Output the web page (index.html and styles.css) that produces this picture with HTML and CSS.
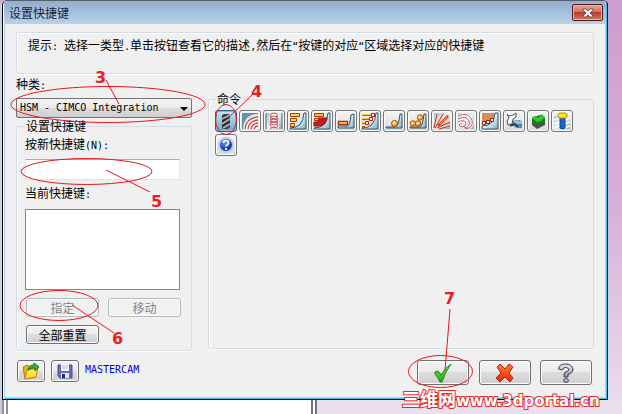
FILE: index.html
```html
<!DOCTYPE html>
<html lang="zh-CN">
<head>
<meta charset="utf-8">
<title>设置快捷键</title>
<link rel="stylesheet" href="styles.css">
</head>
<body>
<svg class="defs" aria-hidden="true">
  <defs>
    <linearGradient id="steel" x1="0" y1="0" x2="1" y2="1"><stop offset="0" stop-color="#9cc3d8"/><stop offset=".5" stop-color="#e3f0f6"/><stop offset="1" stop-color="#7fb0ca"/></linearGradient>
    <linearGradient id="green" x1="0" y1="0" x2="0" y2="1"><stop offset="0" stop-color="#8af04a"/><stop offset="1" stop-color="#1fa51b"/></linearGradient>
    <linearGradient id="red" x1="0" y1="0" x2="0" y2="1"><stop offset="0" stop-color="#ff7b33"/><stop offset="1" stop-color="#e42a08"/></linearGradient>
    <linearGradient id="silver" x1="0" y1="0" x2="0" y2="1"><stop offset="0" stop-color="#e4e6f2"/><stop offset="1" stop-color="#8e92a8"/></linearGradient>
    <radialGradient id="ball" cx=".4" cy=".35"><stop offset="0" stop-color="#fff3c0"/><stop offset="1" stop-color="#f9a51c"/></radialGradient>
    <radialGradient id="globe" cx=".4" cy=".3"><stop offset="0" stop-color="#6f9cf5"/><stop offset="1" stop-color="#123fae"/></radialGradient>
  </defs>
</svg>
<main class="dialog">
  <header class="titlebar">
    <h1>设置快捷键</h1>
    <button class="close" aria-label="关闭"><svg width="12" height="10" viewBox="0 0 12 10"><path d="M1 1h3l2 2.200L8 1h3v1L8 5l3 3v1H8L6 6.800 4 9H1V8l3-3-3-3z" fill="#fff" stroke="#5b3b48" stroke-width=".8"/></svg></button>
  </header>
  <div class="content">
    <p class="hint">提示<span class="half">: </span>选择一类型<span class="half">.</span>单击按钮查看它的描述<span class="half">,</span>然后在<span class="half">“</span>按键的对应<span class="half">“</span>区域选择对应的快捷键</p>
    <div class="columns">
      <section class="side">
        <label class="caption" for="category">种类<span class="half">:</span></label>
        <div class="combo"><select id="category"><option>HSM - CIMCO Integration</option></select></div>
        <fieldset class="group keys">
          <legend>设置快捷键</legend>
          <label for="newkey">按新快捷键<span class="half">(N):</span></label>
          <input id="newkey" type="text">
          <label for="current">当前快捷键<span class="half">:</span></label>
          <select id="current" size="5"></select>
          <div class="actions">
            <button class="btn" disabled>指定</button>
            <button class="btn" disabled>移动</button>
            <button class="btn">全部重置</button>
          </div>
        </fieldset>
      </section>
      <fieldset class="group commands">
        <legend>命令</legend>
        <div class="tools">
          <button class="tool on" aria-label="刀具"><svg viewBox="0 0 18 18"><path d="M5 3l2-1h5l1 1v12l-2 2H6l-1-1z" fill="#3c3f41"/><path d="M5 7l8-4M5 12l8-5M6 16l7-4" stroke="#aab1b5" stroke-width="1.800"/><path d="M5 9l8-4M5 14l8-5" stroke="#171717"/></svg></button>
          <button class="tool" aria-label="平行"><svg viewBox="0 0 18 18"><path d="M1 1h16v16H1z" fill="url(#steel)"/><path d="M1 1h16v1Q3 2 2 17H1z" fill="#5f93ad"/><path d="M3 17Q4 5 17 4v13z" fill="#fff"/><path d="M4 17Q5 6 17 5M7 17Q8 9 17 8M10 17Q11 12 17 11M13 17q1-3 4-3" fill="none" stroke="#cf4546" stroke-width="1.400"/></svg></button>
          <button class="tool" aria-label="螺旋"><svg viewBox="0 0 18 18"><path d="M1 1h16v16H1z" fill="url(#steel)"/><path d="M4 17V6q0-5 5-5t5 5v11z" fill="#fff"/><path d="M1 1v16M17 1v16" stroke="#446c84"/><g fill="none" stroke="#c94d50"><ellipse cx="9" cy="4" rx="3.500" ry="3"/><ellipse cx="9" cy="7" rx="4" ry="3"/><ellipse cx="9" cy="10" rx="4" ry="3"/><ellipse cx="9" cy="13" rx="4" ry="3"/><path d="M5 17q4-4 8 0"/></g></svg></button>
          <button class="tool" aria-label="粗加工"><svg viewBox="0 0 18 18"><path d="M1 1h16v16H1z" fill="#dcebf2"/><path d="M17 1v16H1v-1q13 0 14-15z" fill="url(#steel)" stroke="#27566b"/><path d="M1.500 1.500h9v3h-9zM1.500 6.500h6v3h-6zM1.500 11.500h4v3h-4z" fill="#ffd65a" stroke="#a83a00"/></svg></button>
          <button class="tool" aria-label="残料粗加工"><svg viewBox="0 0 18 18"><path d="M1 1h16v16H1z" fill="#dcebf2"/><path d="M17 1v16H1v-1q13 0 14-15z" fill="url(#steel)" stroke="#27566b"/><path d="M5 6h9q-1 8-8 8H1v-4h4z" fill="#cc1b20" stroke="#8a1115"/><path d="M1.500 1.500h9v3h-9zM1.500 6.500h4v2h-4z" fill="#ffbd52" stroke="#a83a00"/></svg></button>
          <button class="tool" aria-label="水平区域"><svg viewBox="0 0 18 18"><path d="M17 2v14H1v-2h9q3 0 4-11z" fill="url(#steel)" stroke="#27566b"/><path d="M1.500 9.500h9v3h-9z" fill="#ffe07a" stroke="#b33100" stroke-width="1.400"/></svg></button>
          <button class="tool" aria-label="等高"><svg viewBox="0 0 18 18"><path d="M17 1v16H1v-1q13 0 14-15z" fill="url(#steel)" stroke="#27566b"/><path d="M1 3h10M1 7h8M1 11h5M1 15h3" stroke="#c55812" stroke-width="2"/><path d="M1 2.500h9M1 6.500h7M1 10.500h4" stroke="#ffc547"/><path d="M10.500 1.500h3v3h-3zM8.500 5.500h3v3h-3zM4.500 9.500h3v3h-3z" fill="#fff" stroke="#b31e08"/></svg></button>
          <button class="tool" aria-label="清角"><svg viewBox="0 0 18 18"><path d="M17 2v14H1v-1h9q4-1 5-13z" fill="url(#steel)" stroke="#27566b"/><circle cx="9.500" cy="11.500" r="3" fill="url(#ball)" stroke="#c14006"/></svg></button>
          <button class="tool" aria-label="残料清角"><svg viewBox="0 0 18 18"><path d="M17 2v14H1v-1h9q4-1 5-13z" fill="url(#steel)" stroke="#27566b"/><g fill="url(#ball)" stroke="#c14006"><circle cx="4" cy="11.500" r="2.700"/><circle cx="9" cy="11.500" r="2.700"/><circle cx="11" cy="5.500" r="2.700"/></g></svg></button>
          <button class="tool" aria-label="放射"><svg viewBox="0 0 18 18"><path d="M1 1h16v16H1z" fill="url(#steel)"/><path d="M1 17L4 2M2 17L10 2M2 17L16 4M2 17l15-8M2 17l15-3" stroke="#fbd9c4" stroke-width="2"/><path d="M1 16L4 2M2 16L10 2M4 16l13-6M6 17l11-3" stroke="#b92f1b"/><path d="M5 14L15 4" stroke="#d2480f" stroke-width="2.500"/><path d="M7 12l7-7" stroke="#ffb43a"/></svg></button>
          <button class="tool" aria-label="螺旋线"><svg viewBox="0 0 18 18"><path d="M1 1h16v16H1z" fill="url(#steel)"/><path d="M1 4Q11-1 15 8q2 8-7 9M1 7q8-4 11 2 2 6-5 7M1 10q6-3 8 1 0 4-4 4-3 0-3-2 1-2 3-1" fill="none" stroke="#fff" stroke-width="2.500"/><path d="M1 4Q11-1 15 8q2 8-7 9M1 7q8-4 11 2 2 6-5 7M1 10q6-3 8 1 0 4-4 4-3 0-3-2 1-2 3-1" fill="none" stroke="#c35560"/></svg></button>
          <button class="tool" aria-label="投影"><svg viewBox="0 0 18 18"><path d="M1 1h16v16H1z" fill="#dcebf2"/><path d="M17 1v16H1v-3q12 0 13-13z" fill="url(#steel)" stroke="#27566b"/><path d="M3 1v9M7 1v8M11 1v6" stroke="#bd430a" stroke-width="3"/><path d="M3 1v9M7 1v8M11 1v6" stroke="#ffd45c"/><path d="M1.500 9.500h3v3h-3zM5.500 8.500h3v3h-3zM9.500 6.500h3v3h-3z" fill="#fff" stroke="#a51b0b"/></svg></button>
          <button class="tool" aria-label="五轴"><svg viewBox="0 0 18 18"><path d="M6 9l9-1 2 2v6h-5l-6-3z" fill="#4f8aa9"/><path d="M9 9l8 0v3h-7z" fill="#8fc1d8"/><path d="M2 2l2 2 4-1 3-2v4L8 7l-1 5-4 1-1-4 2-3z" fill="#f4f6f7" stroke="#4c5559"/><path d="M5 14l5-2 3 3" fill="none" stroke="#263840" stroke-width="1.500"/></svg></button>
          <button class="tool" aria-label="毛坯"><svg viewBox="0 0 18 18"><path d="M3 6l8-3 5 3v7l-8 4-5-4z" fill="#4d504e"/><path d="M3 6l3-2 3 2 3-3 4 3v3l-8 4-5-4z" fill="#08870e"/><path d="M3 6l3-2 3 2 4-4 3 3-4 4-4 1z" fill="#27cf2a"/></svg></button>
          <button class="tool" aria-label="钻孔"><svg viewBox="0 0 18 18"><path d="M1 4l16-2v15H1z" fill="url(#steel)"/><path d="M1 8l16-6M1 12l16-6M1 16l16-6M8 17l9-3" stroke="#fff" stroke-width="1.500"/><path d="M7 5h5v11l-2 1-3-1z" fill="#1267d4" stroke="#124289"/><path d="M5 2l2-1h5l2 1v3l-2 1H7L5 5z" fill="#ffe51a" stroke="#b39a0a"/></svg></button>
          <button class="tool" aria-label="帮助"><svg viewBox="0 0 18 18"><circle cx="9" cy="9" r="7" fill="url(#globe)" stroke="#b9c8ed" stroke-width="2"/><path d="M6.500 7q0-2.500 2.500-2.500T11.500 7Q11.500 8 10 9q-1 .5-1 1.500M9 12v2" fill="none" stroke="#fff" stroke-width="1.700"/></svg></button>
        </div>
      </fieldset>
    </div>
    <footer class="footer">
      <button class="btn file" aria-label="打开"><svg width="18" height="18" viewBox="0 0 18 18"><path d="M1 5l5-2 2 2 7 0-1 10-11 2z" fill="#e5b210" stroke="#a98109"/><path d="M3 17L5 8l11-2-2 9z" fill="#ffe047" stroke="#b88c08"/><path d="M6 8q1-5 6-5V1l5 4-4 4V6Q9 5 6 8z" fill="#35b84b" stroke="#147027"/></svg></button>
      <button class="btn file" aria-label="保存"><svg width="16" height="16" viewBox="0 0 16 16"><path d="M1 2h14v13H3l-2-2z" fill="#6469b8" stroke="#4a4e98"/><path d="M4 1h8v7H4z" fill="#f6f7fb"/><path d="M5 3h6M5 5h6" stroke="#b7bbd0"/><path d="M4 10h8v5H4z" fill="#e2e4f0"/><path d="M5 11h3v4H5z" fill="#282b68"/></svg></button>
      <span class="profile">MASTERCAM</span>
      <button class="btn big ok" aria-label="确定"><svg width="20" height="20" viewBox="0 0 20 20"><path d="M2 9l3-1 3 4Q12 5 18 1q-6 8-9 18H7Q5 14 2 11z" fill="url(#green)" stroke="#128316"/></svg></button>
      <button class="btn big cancel" aria-label="取消"><svg width="20" height="20" viewBox="0 0 20 20"><path d="M2 4l3-3 5 5 4-5 4 3-4 6 4 5-3 4-5-5-5 5-4-4 5-5z" fill="url(#red)" stroke="#ba2108"/></svg></button>
      <button class="btn big help" aria-label="帮助"><svg width="18" height="20" viewBox="0 0 18 20"><path d="M1.500 6Q2 1 8.500 1T16 6q0 4-5 5.500V14H7v-3q0-2 3-2.500 2-1 1.500-2.500Q11 4.500 8.500 4.500T5.500 7z" fill="url(#silver)" stroke="#3b3e4d"/><ellipse cx="9" cy="17.500" rx="2.500" ry="1.800" fill="url(#silver)" stroke="#3b3e4d"/></svg></button>
    </footer>
  </div>
</main>
<div class="desktop"><div class="pane"></div></div>
<svg class="marks" width="622" height="414" viewBox="0 0 622 414">
  <g fill="none" stroke="#e8161d">
    <ellipse cx="108" cy="104.500" rx="97" ry="18"/>
    <ellipse cx="86.500" cy="171.500" rx="65.500" ry="13"/>
    <ellipse cx="226" cy="119.500" rx="10.500" ry="15"/>
    <ellipse cx="59" cy="305.500" rx="39" ry="15"/>
    <ellipse cx="440.500" cy="371.500" rx="32" ry="16"/>
    <path d="M106 80l13 24M106 170l44 22M252 95l-26 25M72 305l42 28M450 309l-5 62"/>
  </g>
  <g class="digits">
    <text x="95" y="83">3</text><text x="251" y="97">4</text><text x="151" y="207">5</text><text x="112" y="344">6</text><text x="444" y="304">7</text>
  </g>
  <text class="watermark" x="402" y="406"><tspan class="site">三维网</tspan>www.3dportal.cn</text>
</svg>
</body>
</html>
```
FILE: styles.css
```css
* { box-sizing: border-box; }

body {
  display: flex;
  flex-direction: column;
  min-height: 100vh;
  margin: 0;
  padding: 0 14px 0 2px;
  overflow: hidden;
  background: linear-gradient(#cf9ccf, #d6b0d8 50%, #eadfee);
  color: #000;
  font: 12px/16px "Noto Sans CJK SC", sans-serif;
}

button, input, select { font: inherit; color: inherit; margin: 0; padding: 0; }
.defs { position: absolute; width: 0; height: 0; }
.half { font: 10px/12px "DejaVu Sans Mono", monospace; white-space: pre; }

.dialog {
  border: 1px solid #000;
  border-top-color: #55606c;
  border-radius: 5px 5px 0 0;
  background: #f0f0f0;
  box-shadow: inset 1px 0 #fff, inset 2px 0 #a9cfee, inset -1px -1px #35c4e8, inset -2px -2px #b7d7ee, -2px 0 #cbd0e2;
}

.titlebar {
  display: flex;
  align-items: center;
  justify-content: space-between;
  height: 23px;
  margin: 0 1px;
  padding: 0 3px 0 5px;
  border-radius: 4px 4px 0 0;
  background: linear-gradient(#93aecb, #a5c0dc 50%, #b9d1ea);
}
.titlebar h1 { margin: 0; color: #10243d; font-size: 12px; font-weight: 400; }
.close {
  display: grid;
  place-items: center;
  width: 31px;
  height: 17px;
  border: 1px solid #501a21;
  border-radius: 2px;
  background: linear-gradient(#e7a597, #cf705f 48%, #b83c2d 50%, #d37a60);
  box-shadow: inset 0 0 0 1px #e9b3a8;
}

.content { padding: 8px 13px 14px; }
.hint {
  height: 42px;
  margin: 0;
  padding: 4px 11px;
  border: 1px solid #d2dde6;
  border-radius: 3px;
  box-shadow: inset 1px 1px #fff, 0 1px #fff;
}

.columns { display: grid; grid-template-columns: 176px 1fr; gap: 16px; }
.side { display: flex; flex-direction: column; padding-top: 2px; }
.caption { height: 22px; }

.combo { position: relative; height: 20px; }
.combo select {
  display: block;
  width: 100%;
  height: 100%;
  padding-left: 3px;
  appearance: none;
  border: 1px solid #737373;
  border-radius: 2px;
  background: linear-gradient(#f2f2f2, #ebebeb 48%, #dcdcdc 50%, #cfcfcf);
  font: 10px/18px "DejaVu Sans Mono", monospace;
}
.combo::after {
  content: "";
  position: absolute;
  top: 9px;
  right: 4px;
  border: 4px solid transparent;
  border-top-color: #000;
  pointer-events: none;
}

.group {
  min-width: 0;
  margin: 0;
  border: 1px solid #d2dde6;
  border-radius: 3px;
  box-shadow: inset 1px 0 #fff, 0 1px #fff;
}
.group legend { padding: 0 1px; line-height: 16px; }

.keys { padding: 0 10px 6px 8px; }
.keys label { display: block; height: 16px; margin-top: 2px; }
.keys input, .keys select { display: block; width: 155px; background: #fff; }
.keys input {
  height: 21px;
  margin: 7px 0 5px;
  border: 1px solid #e2e3ea;
  border-top-color: #abadb3;
}
.keys select {
  height: 81px;
  margin-top: 8px;
  border: 1px solid #828790;
  border-radius: 0;
}
.actions {
  display: grid;
  grid-template-columns: 73px 73px;
  gap: 8px 9px;
  padding: 8px 0 0 1px;
}

.btn {
  height: 19px;
  border: 1px solid #707070;
  border-radius: 3px;
  background: linear-gradient(#f3f3f3, #ebebeb 48%, #dddddd 50%, #cfcfcf);
  box-shadow: inset 0 0 0 1px #fbfbfb;
  line-height: 16px;
}
.btn:disabled { border-color: #b4b9bb; background: #f1f1f1; color: #858585; }

.commands { margin: 17px 0 2px; padding: 0 5px 0 6px; }
.commands legend { margin-left: 1px; }
.tools { display: flex; flex-wrap: wrap; gap: 2px; padding-top: 3px; }
.tool {
  display: grid;
  place-items: center;
  width: 22px;
  height: 22px;
  border: 1px solid #767676;
  border-radius: 3px;
  background: linear-gradient(#f5f5f5, #dadada);
  box-shadow: inset 0 0 0 1px #fafafa;
}
.tool svg { width: 18px; height: 18px; }
.tool.on {
  border-color: #2c628b;
  background: linear-gradient(#cde5f3, #98c9e4 50%, #6da9cc);
  box-shadow: inset 0 0 0 1px #8fb9d2;
}

.footer { display: flex; gap: 6px; padding: 9px 2px 0 1px; }
.footer .btn { display: grid; place-items: center; }
.footer .file { width: 28px; height: 22px; }
.footer .big { width: 52px; height: 25px; }
.footer .ok { margin-left: auto; }
.footer .cancel { margin-left: 4px; }
.footer .help { margin-left: 3px; }
.profile { color: #0000e8; font: 10px/20px "DejaVu Sans Mono", monospace; }

.desktop { flex: 1; display: flex; margin: 0 -14px 0 -2px; background: #eadfee; border-left: 2px solid #c5cce6; }
.pane { width: 315px; border-left: 6px double #8f909b; border-right: 6px double #70717a; background: #fff; }

.marks { position: absolute; top: 0; left: 0; pointer-events: none; }
.digits { fill: #ee1c25; font: bold 16px "DejaVu Sans", sans-serif; }
.watermark {
  fill: #fff;
  stroke: #e8262c;
  stroke-width: 2px;
  paint-order: stroke;
  font: bold 15px "DejaVu Sans", sans-serif;
}
.site { font: bold 18px "Noto Sans CJK SC", sans-serif; }
```
